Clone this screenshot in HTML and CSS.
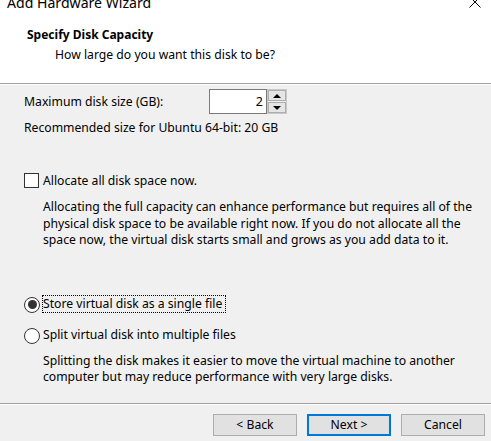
FILE: index.html
```html
<!DOCTYPE html>
<html>
<head>
<meta charset="utf-8">
<link rel="stylesheet" href="styles.css">
</head>
<body>
<div class="window">
  <div class="header">
    <div class="titlebar">
      <span class="title">Add Hardware Wizard</span>
      <svg class="close" width="12" height="12" viewBox="0 0 12 12"><path d="M0.5 0.5 L11.5 11.5 M11.5 0.5 L0.5 11.5" stroke="#000" stroke-width="1" fill="none"/></svg>
    </div>
    <div class="heading">Specify Disk Capacity</div>
    <div class="sub">How large do you want this disk to be?</div>
  </div>
  <div class="sep"></div>
  <div class="content">
    <div class="size-row">
      <span class="size-label">Maximum disk size (GB):</span>
      <div class="spinner">
        <div class="spin-input">2</div>
        <div class="spin-buttons">
          <div class="spin-btn"><span class="tri-up"></span></div>
          <div class="spin-btn"><span class="tri-down"></span></div>
        </div>
      </div>
    </div>
    <div class="rec">Recommended size for Ubuntu 64-bit: 20 GB</div>
    <div class="check-row">
      <span class="checkbox"></span>
      <span class="check-label">Allocate all disk space now.</span>
    </div>
    <p class="desc desc1">Allocating the full capacity can enhance performance but requires all of the physical disk space to be available right now. If you do not allocate all the space now, the virtual disk starts small and grows as you add data to it.</p>
    <div class="radio-row radio1">
      <span class="radio checked"><span class="dot"></span></span>
      <span class="radio-label focus">Store virtual disk as a single file</span>
    </div>
    <div class="radio-row radio2">
      <span class="radio"></span>
      <span class="radio-label">Split virtual disk into multiple files</span>
    </div>
    <p class="desc desc2">Splitting the disk makes it easier to move the virtual machine to another computer but may reduce performance with very large disks.</p>
  </div>
  <div class="sep"></div>
  <div class="footer">
    <button class="btn">&lt; Back</button>
    <button class="btn default">Next &gt;</button>
    <button class="btn">Cancel</button>
  </div>
</div>
</body>
</html>
```
FILE: styles.css
```css
html, body {
  margin: 0;
  padding: 0;
}
body {
  width: 491px;
  height: 441px;
  overflow: hidden;
  background: #f0f0f0;
  font-family: "Noto Sans", "Open Sans", sans-serif;
  font-size: 12px;
  color: #000;
}
.window {
  display: flex;
  flex-direction: column;
  height: 441px;
}
.header {
  background: #fff;
  height: 83px;
  flex: none;
}
.titlebar {
  display: flex;
  justify-content: space-between;
  align-items: flex-start;
  height: 20px;
  margin-top: -7px;
}
.title {
  font-size: 14.1px;
  line-height: 20px;
  margin-left: 7px;
}
.close {
  margin-top: 3px;
  margin-right: 10px;
}
.heading {
  font-weight: bold;
  font-size: 12px;
  line-height: 16px;
  margin-top: 14px;
  margin-left: 27px;
}
.sub {
  font-size: 12.2px;
  line-height: 16px;
  margin-top: 4px;
  margin-left: 55px;
}
.sep {
  flex: none;
  height: 1px;
  background: #a0a0a0;
  border-bottom: 1px solid #fff;
}
.content {
  flex: 1;
  padding-left: 24px;
  font-size: 12.2px;
  line-height: 16px;
}
.size-row {
  display: flex;
  align-items: center;
  margin-top: 4px;
  height: 25px;
}
.size-label {
  width: 185px;
}
.spinner {
  display: flex;
  height: 25px;
}
.spin-input {
  box-sizing: border-box;
  width: 58px;
  height: 25px;
  background: #fff;
  border: 1px solid #7a7a7a;
  text-align: right;
  padding-right: 3px;
  line-height: 23px;
  font-size: 12.5px;
}
.spin-buttons {
  display: flex;
  flex-direction: column;
  gap: 1px;
  width: 20px;
  height: 25px;
  background: #f0f0f0;
  border: 1px solid #c8c8c8;
  box-sizing: border-box;
}
.spin-btn {
  flex: 1;
  display: flex;
  align-items: center;
  justify-content: center;
  background: #e5e5e5;
  border: 1px solid #adadad;
}
.tri-up {
  width: 0;
  height: 0;
  border-left: 4px solid transparent;
  border-right: 4px solid transparent;
  border-bottom: 4px solid #000;
}
.tri-down {
  width: 0;
  height: 0;
  border-left: 4px solid transparent;
  border-right: 4px solid transparent;
  border-top: 4px solid #000;
}
.rec {
  margin-top: 6px;
}
.check-row {
  display: flex;
  align-items: flex-start;
  margin-top: 37px;
  height: 16px;
}
.checkbox {
  box-sizing: border-box;
  width: 15px;
  height: 15px;
  background: #fff;
  border: 1px solid #333;
  margin-right: 4px;
}
.desc {
  margin: 0;
  padding-left: 19px;
  line-height: 16.5px;
}
.desc1 {
  margin-top: 10px;
}
.radio-row {
  display: flex;
  align-items: flex-start;
}
.radio1 {
  margin-top: 46px;
}
.radio2 {
  margin-top: 13px;
}
.radio {
  box-sizing: border-box;
  width: 16px;
  height: 16px;
  margin-top: 2px;
  margin-right: 2px;
  border: 1px solid #333;
  border-radius: 50%;
  background: #fff;
  display: flex;
  align-items: center;
  justify-content: center;
}
.dot {
  width: 9px;
  height: 9px;
  border-radius: 50%;
  background: #333;
}
.radio-label {
  border: 1px dotted transparent;
  padding: 0 3px 0 0;
  line-height: 16px;
}
.radio-label.focus {
  border-color: #000;
}
.desc2 {
  margin-top: 9px;
}
.footer {
  flex: none;
  height: 36px;
  display: flex;
  justify-content: flex-end;
  align-items: flex-start;
  gap: 10px;
  padding-top: 9px;
  padding-right: 6px;
  box-sizing: border-box;
}
.btn {
  box-sizing: border-box;
  width: 84px;
  height: 22px;
  background: #e1e1e1;
  border: 1px solid #adadad;
  font-family: "Noto Sans", "Open Sans", sans-serif;
  font-size: 12.2px;
  color: #000;
  padding: 0;
  line-height: 18px;
}
.btn.default {
  border: 2px solid #0078d7;
}
```
